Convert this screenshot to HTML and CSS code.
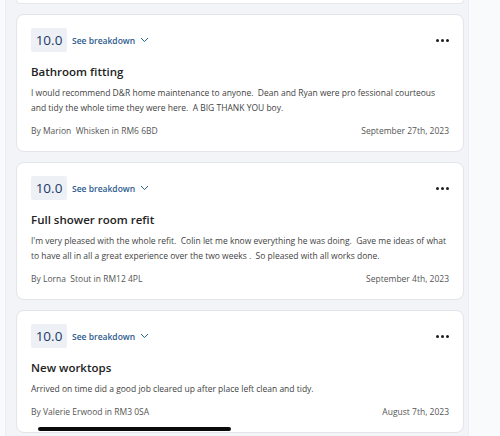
FILE: index.html
```html
<!DOCTYPE html>
<html>
<head>
<meta charset="utf-8">
<link rel="stylesheet" href="styles.css">
</head>
<body>
<div class="panel">
  <div class="stub"></div>

  <div class="card">
    <div class="head">
      <div class="score">10.0</div>
      <div class="breakdown">See breakdown
        <svg class="chev" width="9" height="6" viewBox="0 0 9 6"><path d="M1 1 L4.5 4.6 L8 1" fill="none" stroke="#2d5a8e" stroke-width="1"/></svg>
      </div>
      <div class="dots"><span></span><span></span><span></span></div>
    </div>
    <div class="title">Bathroom fitting</div>
    <div class="body">I would recommend D&amp;R home maintenance to anyone.&nbsp; Dean and Ryan were pro fessional courteous and tidy the whole time they were here.&nbsp; A BIG THANK YOU boy.</div>
    <div class="foot"><span>By Marion&nbsp; Whisken in RM6 6BD</span><span>September 27th, 2023</span></div>
  </div>

  <div class="card">
    <div class="head">
      <div class="score">10.0</div>
      <div class="breakdown">See breakdown
        <svg class="chev" width="9" height="6" viewBox="0 0 9 6"><path d="M1 1 L4.5 4.6 L8 1" fill="none" stroke="#2d5a8e" stroke-width="1"/></svg>
      </div>
      <div class="dots"><span></span><span></span><span></span></div>
    </div>
    <div class="title">Full shower room refit</div>
    <div class="body">I'm very pleased with the whole refit.&nbsp; Colin let me know everything he was doing.&nbsp; Gave me ideas of what to have all in all a great experience over the two weeks .&nbsp; So pleased with all works done.</div>
    <div class="foot"><span>By Lorna&nbsp; Stout in RM12 4PL</span><span>September 4th, 2023</span></div>
  </div>

  <div class="card">
    <div class="head">
      <div class="score">10.0</div>
      <div class="breakdown">See breakdown
        <svg class="chev" width="9" height="6" viewBox="0 0 9 6"><path d="M1 1 L4.5 4.6 L8 1" fill="none" stroke="#2d5a8e" stroke-width="1"/></svg>
      </div>
      <div class="dots"><span></span><span></span><span></span></div>
    </div>
    <div class="title">New worktops</div>
    <div class="body">Arrived on time did a good job cleared up after place left clean and tidy.</div>
    <div class="foot"><span>By Valerie Erwood in RM3 0SA</span><span>August 7th, 2023</span></div>
  </div>
</div>
<div class="homebar"></div>
</body>
</html>
```
FILE: styles.css
```css
html, body {
  margin: 0;
  padding: 0;
}
body {
  width: 500px;
  height: 436px;
  overflow: hidden;
  background: #f9fafc;
  font-family: "Open Sans", "Noto Sans", sans-serif;
  position: relative;
}
.panel {
  margin-left: 5px;
  width: 464px;
  height: 436px;
  background: #f3f4f8;
  border-left: 1px solid #eceef3;
  border-right: 1px solid #eceef3;
  padding: 0 4px 0 10px;
  box-sizing: border-box;
  display: flex;
  flex-direction: column;
  gap: 10px;
}
.stub {
  height: 4px;
  flex-shrink: 0;
  background: #fff;
  border: 1px solid #e5e7ed;
  border-top: none;
  border-radius: 0 0 8px 8px;
  box-sizing: border-box;
}
.card {
  flex-shrink: 0;
  background: #fff;
  border: 1px solid #e3e5eb;
  border-radius: 8px;
  padding: 13px 14px 13px 14px;
}
.head {
  display: flex;
  align-items: center;
  height: 24px;
}
.score {
  width: 36px;
  height: 24px;
  background: #edf1f6;
  color: #1b3a66;
  font-size: 13.5px;
  line-height: 24px;
  text-align: center;
  border-radius: 2px;
}
.breakdown {
  margin-left: 5px;
  color: #2d5a8e;
  font-size: 8.5px;
  font-weight: 600;
  display: flex;
  align-items: center;
  gap: 5px;
}
.chev {
  display: block;
}
.dots {
  margin-left: auto;
  display: flex;
  gap: 2px;
}
.dots span {
  width: 3px;
  height: 3px;
  border-radius: 50%;
  background: #1e1e1e;
}
.title {
  margin-top: 10px;
  font-size: 11.5px;
  line-height: 20px;
  font-weight: 600;
  color: #222;
}
.body {
  margin-top: 3px;
  font-size: 8.5px;
  line-height: 15px;
  color: #3f3f3f;
}
.foot {
  margin-top: 8px;
  display: flex;
  justify-content: space-between;
  font-size: 8.5px;
  line-height: 15px;
  color: #555;
}
.homebar {
  position: absolute;
  left: 38px;
  top: 427px;
  width: 193px;
  height: 4px;
  border-radius: 2px;
  background: #0a0a0a;
}
```
